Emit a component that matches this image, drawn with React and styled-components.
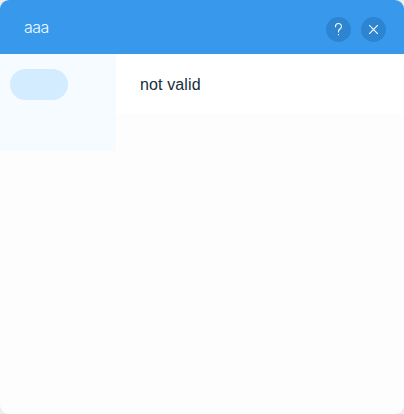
import React from "react";
import styled, { createGlobalStyle } from "styled-components";

const Global = createGlobalStyle`
  * { box-sizing: border-box; }
  body { margin: 0; background: #ededed; font-family: "Liberation Sans", Arial, sans-serif; }
`;
const Panel = styled.main`
  width: 404px;
  height: 414px;
  overflow: hidden;
  border-radius: 9px;
  background: #fdfdfd;
`;
const Header = styled.header`
  display: flex;
  align-items: center;
  height: 54px;
  padding: 4px 18px 0 24px;
  background: #3899ec;
`;
const Title = styled.h1`
  flex: 1;
  margin: 0;
  padding-bottom: 4px;
  color: #f2f9ff;
  font: 300 16px/24px "Inter", sans-serif;
  letter-spacing: -0.5px;
`;
const Actions = styled.div`
  display: flex;
  gap: 10px;
`;
const IconButton = styled.button`
  display: grid;
  place-items: center;
  width: 25px;
  height: 25px;
  padding: 0;
  border: 0;
  border-radius: 50%;
  background: #2d84d0;
`;
const Icon = styled.svg`
  display: block;
  fill: none;
  stroke: #fff;
  stroke-width: 1.1;
`;
const Body = styled.div`
  display: flex;
  align-items: flex-start;
`;
const Sidebar = styled.aside`
  width: 116px;
  height: 97px;
  padding: 15px 10px;
  background: #f5fbff;
`;
const Pill = styled.div`
  width: 58px;
  height: 31px;
  border-radius: 16px;
  background: #d4ecff;
`;
const Content = styled.section`
  flex: 1;
  height: 60px;
  padding: 19px 24px 17px;
  background: #fff;
  color: #162d3d;
  font-size: 16px;
  line-height: 24px;
  letter-spacing: 0.12px;
`;

export default function App() {
  return (
    <Panel>
      <Global />
      <Header>
        <Title>aaa</Title>
        <Actions>
          <IconButton aria-label="Help">
            <Icon width="25" height="25" viewBox="0 0 25 25">
              <path d="M9.5 10.2V9.5a3 3 0 0 1 6 0c0 2.2-3 2.8-3 4.7v1.3M12.5 17v1.2" />
            </Icon>
          </IconButton>
          <IconButton aria-label="Close">
            <Icon width="25" height="25" viewBox="0 0 25 25">
              <path d="M8.2 8.2l8.6 8.6M16.8 8.2l-8.6 8.6" />
            </Icon>
          </IconButton>
        </Actions>
      </Header>
      <Body>
        <Sidebar><Pill /></Sidebar>
        <Content>not valid</Content>
      </Body>
    </Panel>
  );
}
